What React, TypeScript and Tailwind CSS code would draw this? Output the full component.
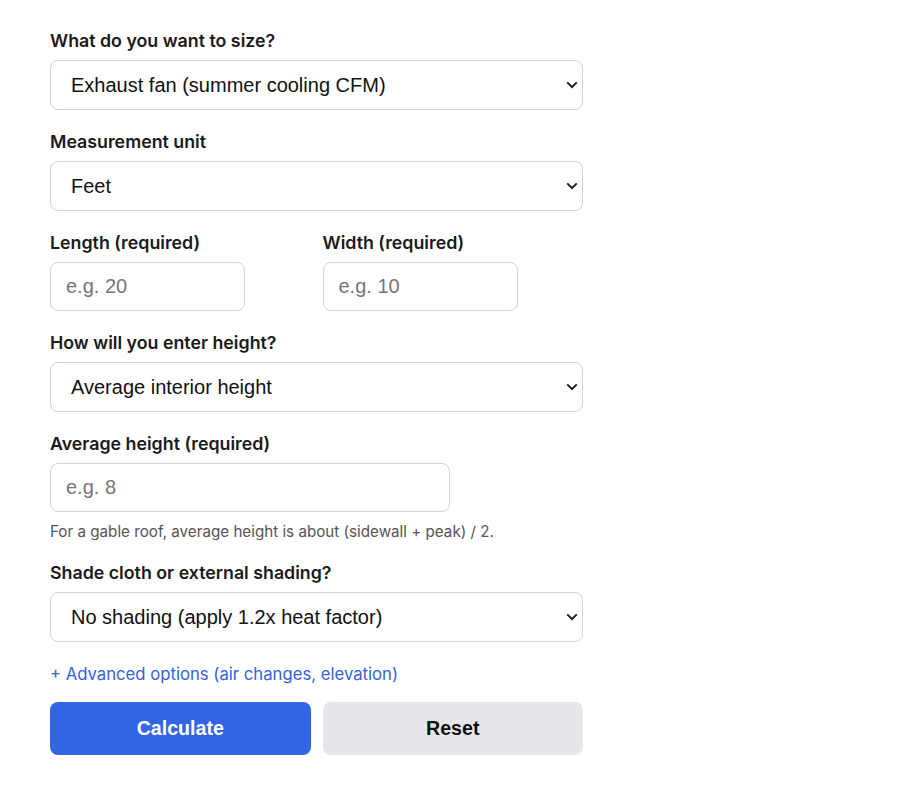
import { useState } from 'react';

const labelCls = 'block mb-[7px] text-[17.8px] leading-6 font-semibold text-[#1a1a1a] font-["Inter",sans-serif]';
const boxCls =
  'block rounded-lg border border-[#cfd4dc] bg-white text-[20px] text-[#111] font-["Liberation_Sans",Arial,sans-serif] outline-none';

function Chevron() {
  return (
    <svg
      className="pointer-events-none absolute right-[5px] top-1/2 -translate-y-1/2"
      width="12"
      height="8"
      viewBox="0 0 12 8"
    >
      <path d="M1.2 1.4 L6 6 L10.8 1.4" fill="none" stroke="#222" strokeWidth="2" />
    </svg>
  );
}

function Select({ value, options }: { value: string; options: string[] }) {
  const [v, setV] = useState(value);
  return (
    <div className="relative">
      <select
        value={v}
        onChange={(e) => setV(e.target.value)}
        className={`${boxCls} h-[50px] w-full appearance-none pl-5 pr-8`}
      >
        {options.map((o) => (
          <option key={o} value={o}>
            {o}
          </option>
        ))}
      </select>
      <Chevron />
    </div>
  );
}

function NumberInput({ placeholder }: { placeholder: string }) {
  return (
    <input
      type="text"
      placeholder={placeholder}
      className={`${boxCls} h-[49px] w-3/4 px-[15px] placeholder:text-[#767676]`}
    />
  );
}

export default function App() {
  return (
    <div className="min-h-screen bg-white pl-[50px] pt-[29px]">
      <form className="w-[533px]" onSubmit={(e) => e.preventDefault()}>
        {/* Target */}
        <div className="mb-5">
          <label className={labelCls}>What do you want to size?</label>
          <Select
            value="Exhaust fan (summer cooling CFM)"
            options={['Exhaust fan (summer cooling CFM)', 'Heater (winter BTU)']}
          />
        </div>

        {/* Unit */}
        <div className="mb-5">
          <label className={labelCls}>Measurement unit</label>
          <Select value="Feet" options={['Feet', 'Meters']} />
        </div>

        {/* Footprint */}
        <div className="mb-5 grid grid-cols-2 gap-3">
          <div>
            <label className={labelCls}>Length (required)</label>
            <NumberInput placeholder="e.g. 20" />
          </div>
          <div>
            <label className={labelCls}>Width (required)</label>
            <NumberInput placeholder="e.g. 10" />
          </div>
        </div>

        {/* Height mode */}
        <div className="mb-5">
          <label className={labelCls}>How will you enter height?</label>
          <Select
            value="Average interior height"
            options={['Average interior height', 'Sidewall and peak height']}
          />
        </div>

        {/* Average height */}
        <div className="mb-[19px]">
          <label className={labelCls}>Average height (required)</label>
          <NumberInput placeholder="e.g. 8" />
          <p className='mt-[10px] text-[15.2px] leading-5 text-[#555] font-["Inter",sans-serif]'>
            For a gable roof, average height is about (sidewall + peak) / 2.
          </p>
        </div>

        {/* Shading */}
        <div className="mb-5">
          <label className={labelCls}>Shade cloth or external shading?</label>
          <Select
            value="No shading (apply 1.2x heat factor)"
            options={['No shading (apply 1.2x heat factor)', 'Shade cloth installed']}
          />
        </div>

        <button
          type="button"
          className='mb-4 block text-[16.7px] leading-6 text-[#3461e0] font-["Inter",sans-serif]'
        >
          + Advanced options (air changes, elevation)
        </button>

        <div className="grid grid-cols-2 gap-3">
          <button
            type="submit"
            className='h-[53px] rounded-lg bg-[#3465e4] text-[19.6px] font-bold text-white font-["Liberation_Sans",Arial,sans-serif]'
          >
            Calculate
          </button>
          <button
            type="button"
            className='h-[53px] rounded-lg bg-[#e5e7eb] text-[19.6px] font-bold text-[#111] font-["Liberation_Sans",Arial,sans-serif]'
          >
            Reset
          </button>
        </div>
      </form>
    </div>
  );
}
